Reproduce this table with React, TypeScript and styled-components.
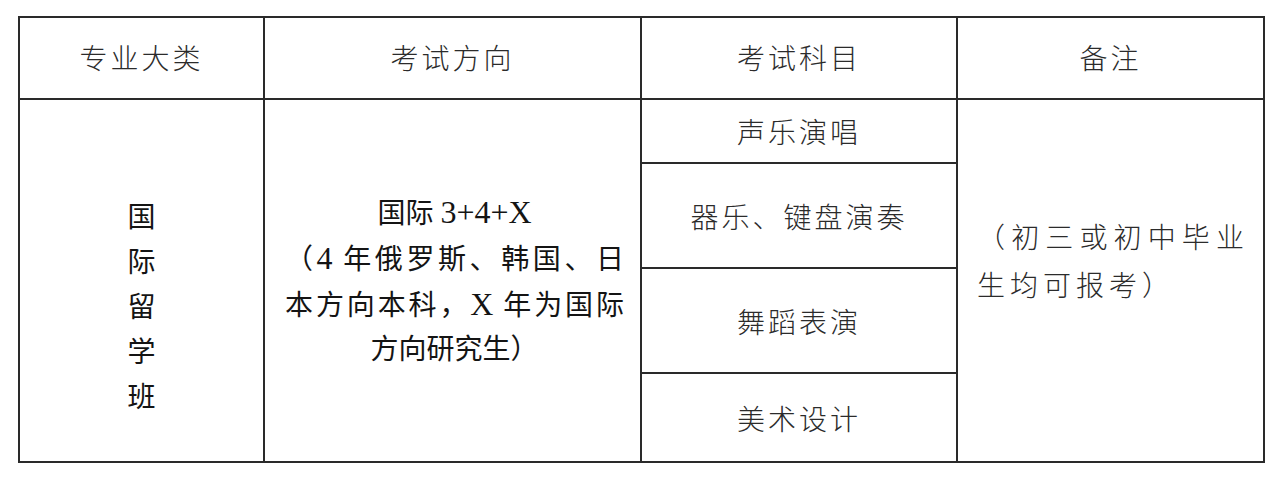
import * as React from 'react';
import styled, { createGlobalStyle } from 'styled-components';

const GlobalStyle = createGlobalStyle`
  html, body {
    margin: 0;
    padding: 0;
    background: #fff;
  }
  body {
    font-family: "Noto Sans CJK SC", sans-serif;
  }
`;

const Page = styled.div`
  width: 1280px;
  height: 477px;
  box-sizing: border-box;
  padding: 16px 0 0 18px;
  background: #fff;
`;

const Table = styled.table`
  width: 1245px;
  border-collapse: collapse;
  table-layout: fixed;
  color: #2b2b2b;
  font-family: "Noto Sans CJK SC", sans-serif;
  font-weight: 300;
  font-size: 28px;
`;

interface RowProps {
  h: number;
}

const Row = styled.tr<RowProps>`
  height: ${(p) => p.h}px;
`;

const Cell = styled.td`
  border: 2px solid #2a2a2a;
  padding: 0;
  text-align: center;
  vertical-align: middle;
  letter-spacing: 3px;
  line-height: 1;
`;

const HeadCell = styled(Cell)`
  padding-bottom: 2px;
`;

const VerticalWords = styled.div`
  display: flex;
  flex-direction: column;
  align-items: center;
  padding-top: 50px;
  color: #141414;
  font-weight: 400;
  letter-spacing: 0;
`;

const VChar = styled.span`
  display: block;
  height: 45px;
  line-height: 45px;
`;

const Direction = styled.div`
  padding: 0 16px 0 20px;
  color: #141414;
  font-family: "Liberation Serif", "Noto Sans CJK SC", serif;
  font-weight: 400;
  letter-spacing: 0;
`;

interface LineProps {
  spread?: boolean;
}

const Line = styled.div<LineProps>`
  height: 46px;
  line-height: 46px;
  text-align: ${(p) => (p.spread ? 'justify' : 'center')};
  text-align-last: ${(p) => (p.spread ? 'justify' : 'center')};
  white-space: nowrap;
`;

const Latin = styled.span`
  font-size: 32px;
`;

const Note = styled.div`
  padding: 0 14px 42px 19px;
  text-align: left;
  letter-spacing: 5px;
  line-height: 48px;
`;

const NoteLine = styled.div<LineProps>`
  text-align: ${(p) => (p.spread ? 'justify' : 'left')};
  text-align-last: ${(p) => (p.spread ? 'justify' : 'left')};
  white-space: nowrap;
`;

const headers = ['专业大类', '考试方向', '考试科目', '备注'];

const subjects = [
  { text: '声乐演唱', h: 64 },
  { text: '器乐、键盘演奏', h: 105 },
  { text: '舞蹈表演', h: 105 },
  { text: '美术设计', h: 89 },
];

export default function App() {
  return (
    <Page>
      <GlobalStyle />
      <Table>
        <colgroup>
          <col style={{ width: 245 }} />
          <col style={{ width: 377 }} />
          <col style={{ width: 316 }} />
          <col style={{ width: 307 }} />
        </colgroup>
        <tbody>
          <Row h={82}>
            {headers.map((h) => (
              <HeadCell key={h}>{h}</HeadCell>
            ))}
          </Row>
          {subjects.map((s, i) => (
            <Row h={s.h} key={s.text}>
              {i === 0 && (
                <Cell rowSpan={4}>
                  <VerticalWords>
                    {'国际留学班'.split('').map((c) => (
                      <VChar key={c}>{c}</VChar>
                    ))}
                  </VerticalWords>
                </Cell>
              )}
              {i === 0 && (
                <Cell rowSpan={4}>
                  <Direction>
                    <Line>
                      国际 <Latin>3+4+X</Latin>
                    </Line>
                    <Line spread>
                      （<Latin>4</Latin> 年俄罗斯、韩国、日
                    </Line>
                    <Line spread>
                      本方向本科，<Latin>X</Latin> 年为国际
                    </Line>
                    <Line>方向研究生）</Line>
                  </Direction>
                </Cell>
              )}
              <Cell>{s.text}</Cell>
              {i === 0 && (
                <Cell rowSpan={4}>
                  <Note>
                    <NoteLine spread>（初三或初中毕业</NoteLine>
                    <NoteLine>生均可报考）</NoteLine>
                  </Note>
                </Cell>
              )}
            </Row>
          ))}
        </tbody>
      </Table>
    </Page>
  );
}
